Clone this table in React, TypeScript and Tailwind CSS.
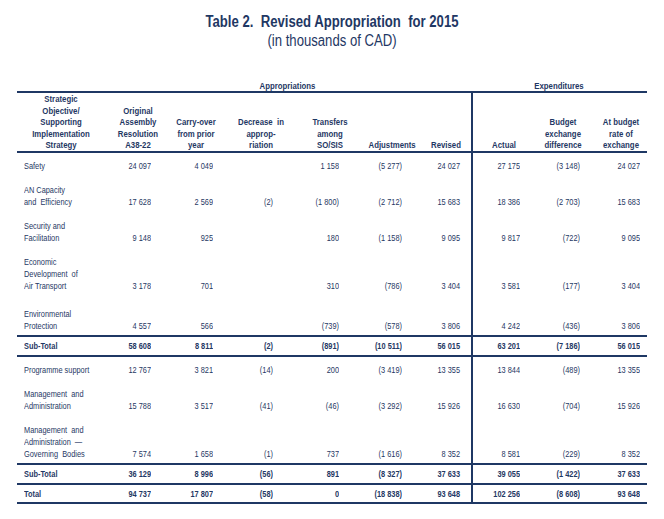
import React from 'react';

type Row = {
  label: string[];
  values: string[];
  pad: string;
  strong?: boolean;
  line?: string;
};

// the source uses Arial Narrow; no narrow face here, so Liberation Sans is squeezed
const narrow = 'scale-x-[0.82]';

const colW = ['w-[93px]', 'w-[56px]', 'w-[60px]', 'w-[70px]', 'w-[56px]', 'w-[62px]', 'w-[57px]', 'w-[59px]', 'w-[60px]', 'w-[57px]'];
const numPr = ['pr-[15px]', 'pr-[13px]', 'pr-[23px]', 'pr-[13px]', 'pr-[12px]', 'pr-[11px]', 'pr-[10px]', 'pr-[10px]', 'pr-[7px]'];
const headPad = ['pr-[5px]', '', '', '', 'pl-[12px]', 'pl-[12px]', 'pl-[7px]', 'pl-[5px]', 'pl-[6px]', 'pl-[5px]'];

const heads = [
  ['Strategic', 'Objective/', 'Supporting', 'Implementation', 'Strategy'],
  ['Original', 'Assembly', 'Resolution', 'A38-22'],
  ['Carry-over', 'from prior', 'year'],
  ['Decrease  in', 'approp-', 'riation'],
  ['Transfers', 'among', 'SO/SIS'],
  ['Adjustments'],
  ['Revised'],
  ['Actual'],
  ['Budget', 'exchange', 'difference'],
  ['At budget', 'rate of', 'exchange'],
];

const rows: Row[] = [
  { label: ['Safety'], values: ['24 097', '4 049', '', '1 158', '(5 277)', '24 027', '27 175', '(3 148)', '24 027'], pad: 'pt-[7px]' },
  { label: ['AN Capacity', 'and  Efficiency'], values: ['17 628', '2 569', '(2)', '(1 800)', '(2 712)', '15 683', '18 386', '(2 703)', '15 683'], pad: 'pt-[12px]' },
  { label: ['Security and', 'Facilitation'], values: ['9 148', '925', '', '180', '(1 158)', '9 095', '9 817', '(722)', '9 095'], pad: 'pt-[12px]' },
  { label: ['Economic', 'Development  of', 'Air Transport'], values: ['3 178', '701', '', '310', '(786)', '3 404', '3 581', '(177)', '3 404'], pad: 'pt-[12px]' },
  { label: ['Environmental', 'Protection'], values: ['4 557', '566', '', '(739)', '(578)', '3 806', '4 242', '(436)', '3 806'], pad: 'pt-[16px] pb-[3px]' },
  { label: ['Sub-Total'], values: ['58 608', '8 811', '(2)', '(891)', '(10 511)', '56 015', '63 201', '(7 186)', '56 015'], pad: 'pt-[3px] pb-[3px]', strong: true, line: 'border-t-2 border-b-2' },
  { label: ['Programme support'], values: ['12 767', '3 821', '(14)', '200', '(3 419)', '13 355', '13 844', '(489)', '13 355'], pad: 'pt-[7px]' },
  { label: ['Management  and', 'Administration'], values: ['15 788', '3 517', '(41)', '(46)', '(3 292)', '15 926', '16 630', '(704)', '15 926'], pad: 'pt-[12px]' },
  { label: ['Management  and', 'Administration  —', 'Governing  Bodies'], values: ['7 574', '1 658', '(1)', '737', '(1 616)', '8 352', '8 581', '(229)', '8 352'], pad: 'pt-[12px] pb-[3px]' },
  { label: ['Sub-Total'], values: ['36 129', '8 996', '(56)', '891', '(8 327)', '37 633', '39 055', '(1 422)', '37 633'], pad: 'pt-[3px] pb-[3px]', strong: true, line: 'border-t-2 border-b-2' },
  { label: ['Total'], values: ['94 737', '17 807', '(58)', '0', '(18 838)', '93 648', '102 256', '(8 608)', '93 648'], pad: 'pt-[3px] pb-[2px]', strong: true, line: 'border-b-2' },
];

const App = () => {
  return (
    <div className="w-[664px] h-[519px] bg-white text-[#1f3864] font-['Liberation_Sans_Narrow','Arial_Narrow','Liberation_Sans',Arial,sans-serif] pt-[13px]">
      <div className="text-center">
        <h1 className={`text-[16px] leading-[17px] font-bold ${narrow}`}>Table 2.&nbsp; Revised Appropriation&nbsp; for 2015</h1>
        <p className={`text-[16px] leading-[17px] mt-[2px] ${narrow}`}>(in thousands of CAD)</p>
      </div>

      <table className="table-fixed border-separate border-spacing-0 w-[630px] ml-[17px] mt-[31px] text-[9px] leading-[12px] whitespace-pre">
        <colgroup>
          {colW.map((w, i) => (
            <col key={i} className={w} />
          ))}
        </colgroup>
        <thead>
          <tr className="text-[9.5px] leading-[11px]">
            <th />
            <th colSpan={6} className="font-bold pr-[6px]">
              <div className={narrow}>Appropriations</div>
            </th>
            <th colSpan={3} className="font-bold">
              <div className={narrow}>Expenditures</div>
            </th>
          </tr>
          <tr className="text-[9.5px] leading-[11.6px]">
            {heads.map((h, i) => (
              <th
                key={i}
                className={`align-bottom text-center font-bold border-t-2 border-b-2 border-[#1f3864] ${headPad[i]} ${i === 7 ? 'border-l-2' : ''}`}
              >
                <div className={narrow}>
                  {h.map((l, j) => (
                    <div key={j}>{l}</div>
                  ))}
                </div>
              </th>
            ))}
          </tr>
        </thead>
        <tbody>
          {rows.map((r, ri) => (
            <tr key={ri} className={r.strong ? 'font-bold' : ''}>
              <td className={`align-bottom text-left pl-[7px] border-[#1f3864] ${r.pad} ${r.line ?? ''}`}>
                <div className={`origin-left ${narrow}`}>
                  {r.label.map((l, j) => (
                    <div key={j}>{l}</div>
                  ))}
                </div>
              </td>
              {r.values.map((v, i) => (
                <td
                  key={i}
                  className={`align-bottom text-right border-[#1f3864] ${numPr[i]} ${r.pad} ${r.line ?? ''} ${i === 6 ? 'border-l-2' : ''}`}
                >
                  <div className={`origin-right ${narrow}`}>{v}</div>
                </td>
              ))}
            </tr>
          ))}
        </tbody>
      </table>
    </div>
  );
};

export default App;
